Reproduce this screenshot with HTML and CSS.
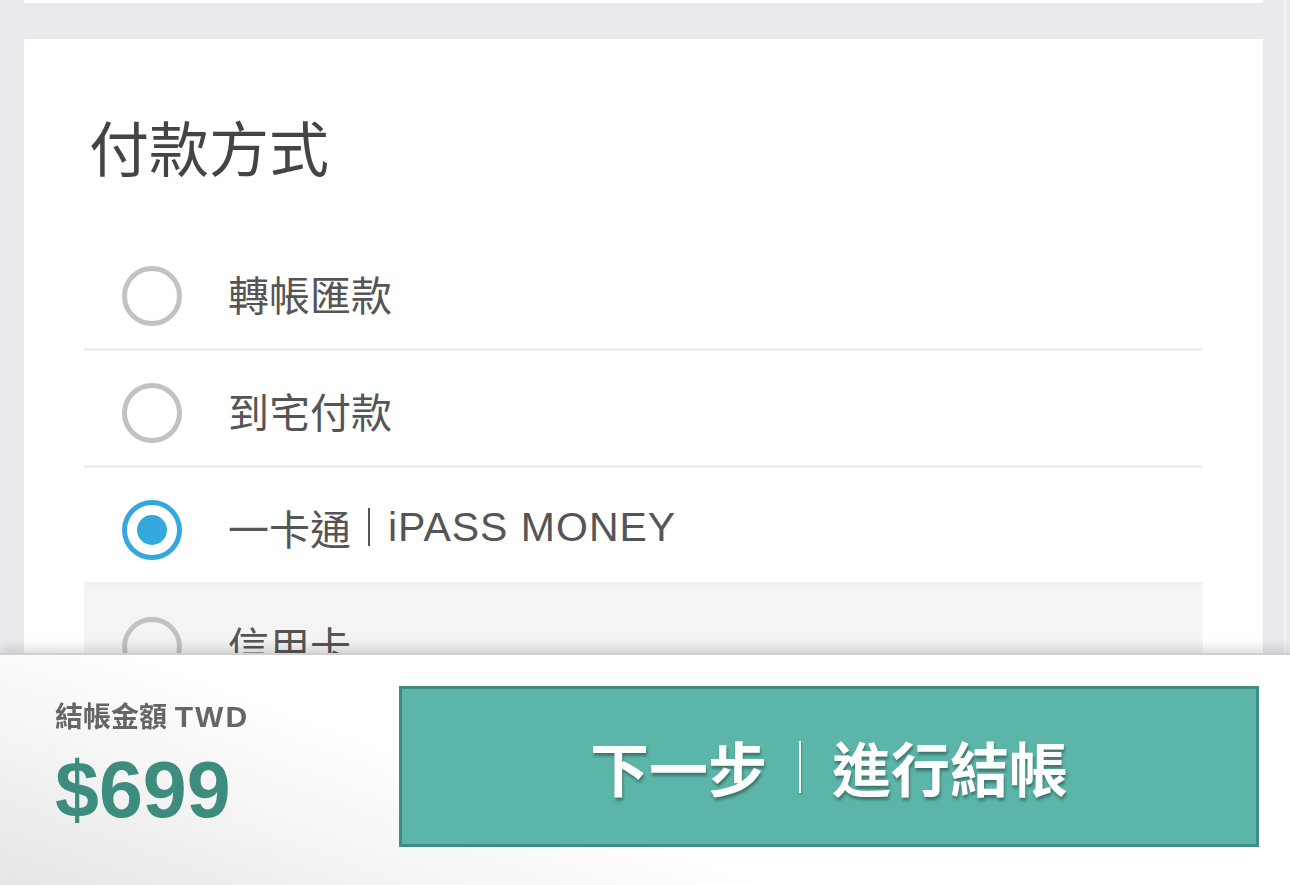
FILE: index.html
```html
<!DOCTYPE html>
<html lang="zh-Hant">
<head>
<meta charset="utf-8">
<title>付款方式</title>
<link rel="stylesheet" href="styles.css">
</head>
<body>
<div class="page">
  <div class="card card-top"></div>
  <div class="card card-pay">
    <h2 class="title">付款方式</h2>
    <ul class="options">
      <li class="option"><span class="radio"></span><span class="label">轉帳匯款</span></li>
      <li class="option"><span class="radio"></span><span class="label">到宅付款</span></li>
      <li class="option selected"><span class="radio"></span><span class="label">一卡通<span class="bar"></span><span class="latin">iPASS MONEY</span></span></li>
      <li class="option hover"><span class="radio"></span><span class="label">信用卡</span></li>
    </ul>
  </div>
</div>
<div class="edge"></div>
<div class="checkout">
  <div class="total">
    <div class="total-label">結帳金額 <span class="cur">TWD</span></div>
    <div class="total-amount">$699</div>
  </div>
  <button class="next"><span>下一步</span><span class="sep"></span><span>進行結帳</span></button>
</div>
</body>
</html>
```
FILE: styles.css
```css
html, body {
  margin: 0;
  padding: 0;
  height: 100%;
  overflow: hidden;
}
body {
  background: #e9eaee;
  font-family: "Liberation Sans", "Noto Sans CJK TC", sans-serif;
  color: #555;
}
.page {
  height: 885px;
  overflow: hidden;
  padding: 0 27px 0 24px;
  display: flex;
  flex-direction: column;
  gap: 36px;
}
.edge {
  position: fixed;
  top: 0;
  bottom: 0;
  right: 4px;
  width: 2px;
  background: #f1f2f4;
}
.card {
  background: #fff;
}
.card-top {
  height: 3px;
  flex: none;
}
.card-pay {
  flex: none;
  padding: 72px 60px 200px 60px;
}
.title {
  margin: 0 0 53px 5px;
  font-size: 60px;
  line-height: 70px;
  font-weight: 400;
  color: #444;
  font-family: "Noto Sans CJK TC", sans-serif;
}
.options {
  list-style: none;
  margin: 0;
  padding: 0;
}
.option {
  display: flex;
  align-items: center;
  height: 114px;
  padding: 0 0 0 38px;
  border-bottom: 3px solid #efefef;
}
.option .radio {
  position: relative;
  top: 5px;
}
.option .label {
  position: relative;
  top: 2px;
}
.option.hover {
  background: #f4f4f4;
  border-bottom: none;
}
.radio {
  width: 60px;
  height: 60px;
  box-sizing: border-box;
  border: 5px solid #c2c2c2;
  border-radius: 50%;
  flex: none;
  display: flex;
  align-items: center;
  justify-content: center;
}
.selected .radio {
  border-color: #35a7df;
}
.selected .radio::after {
  content: "";
  width: 30px;
  height: 30px;
  border-radius: 50%;
  background: #35a7df;
}
.label {
  margin-left: 46px;
  font-size: 41px;
  color: #555;
  display: flex;
  align-items: center;
}
.label .latin {
  letter-spacing: 1px;
}
.label .bar {
  display: inline-block;
  width: 2px;
  height: 38px;
  background: #555;
  margin: 0 18px 0 17px;
}
.checkout {
  position: fixed;
  left: 0;
  right: 0;
  bottom: 0;
  height: 230px;
  border-top: 2px solid #cfcfcf;
  background: linear-gradient(20deg, #e6e6e6 0%, #ffffff 40%, #ffffff 100%);
  box-shadow: 0 -6px 10px rgba(0, 0, 0, 0.12);
  display: flex;
  align-items: flex-start;
  padding: 0 31px 0 55px;
}
.total {
  width: 344px;
  flex: none;
  padding-top: 44px;
}
.total-label {
  font-size: 28px;
  line-height: 36px;
  font-weight: 700;
  color: #666;
}
.total-label .cur {
  font-size: 30px;
  letter-spacing: 2px;
}
.total-amount {
  margin-top: 11px;
  font-size: 79px;
  line-height: 86px;
  font-weight: 700;
  color: #3d8d7e;
}
.next {
  flex: 1;
  margin-top: 31px;
  height: 161px;
  background: #5bb5a8;
  border: 3px solid #3e8d80;
  color: #fff;
  font-family: "Noto Sans CJK TC", sans-serif;
  font-size: 59px;
  font-weight: 700;
  display: flex;
  align-items: center;
  justify-content: center;
  text-shadow: 1px 3px 3px rgba(0, 0, 0, 0.35);
  padding: 0;
  cursor: pointer;
}
.next .sep {
  display: inline-block;
  width: 2px;
  height: 52px;
  background: #fff;
  margin: 0 31px 0 32px;
  box-shadow: 1px 2px 2px rgba(0, 0, 0, 0.2);
}
```
